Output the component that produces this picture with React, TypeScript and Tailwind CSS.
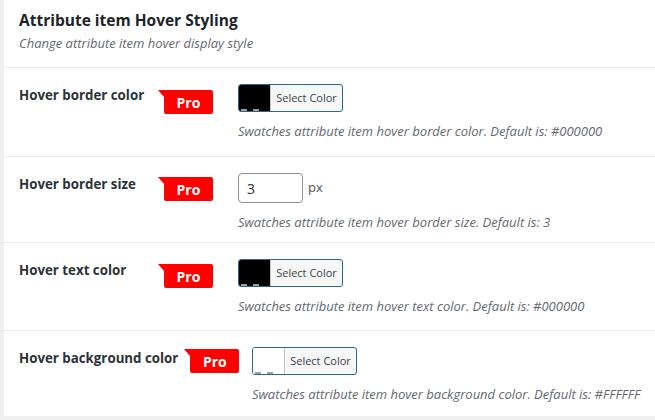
import React from "react";

type Row = {
  label: string;
  kind: "color" | "number";
  value: string;
  desc: string;
  labelWidth: string;
  height: string;
  badgeTop: string;
};

const rows: Row[] = [
  {
    label: "Hover border color",
    kind: "color",
    value: "#000000",
    desc: "Swatches attribute item hover border color. Default is: #000000",
    labelWidth: "w-[234px]",
    height: "h-[89px]",
    badgeTop: "mt-[5px]",
  },
  {
    label: "Hover border size",
    kind: "number",
    value: "3",
    desc: "Swatches attribute item hover border size. Default is: 3",
    labelWidth: "w-[234px]",
    height: "h-[86px]",
    badgeTop: "mt-[3px]",
  },
  {
    label: "Hover text color",
    kind: "color",
    value: "#000000",
    desc: "Swatches attribute item hover text color. Default is: #000000",
    labelWidth: "w-[234px]",
    height: "h-[88px]",
    badgeTop: "mt-[4px]",
  },
  {
    label: "Hover background color",
    kind: "color",
    value: "#FFFFFF",
    desc: "Swatches attribute item hover background color. Default is: #FFFFFF",
    labelWidth: "w-[248px]",
    height: "h-[86px]",
    badgeTop: "mt-[1px]",
  },
];

function ProBadge({ top }: { top: string }) {
  return (
    <div className={`relative h-[24px] w-[56px] shrink-0 ${top}`}>
      <svg width="56" height="24" viewBox="0 0 56 24" className="absolute left-0 top-0">
        <path d="M0 0 H53 Q55 0 55 2 V22 Q55 24 53 24 H8 Q6 24 6 22 V7 Z" fill="#ff0000" />
      </svg>
      <span className="absolute left-[6px] right-[1px] top-0 flex h-[24px] items-center justify-center text-[14px] font-bold text-white">
        Pro
      </span>
    </div>
  );
}

function ColorButton({ color }: { color: string }) {
  return (
    <div className="flex h-[28px] w-[105px] overflow-hidden rounded-[3px] border border-[#2a6a86] bg-[#f6f7f7]">
      <div className="relative w-[32px] border-r border-[#c3c4c7]" style={{ background: color }}>
        <div className="absolute bottom-0 left-[2px] h-[2px] w-[6px] bg-[#9aa0a6]" />
        <div className="absolute bottom-0 left-[14px] h-[2px] w-[6px] bg-[#9aa0a6]" />
      </div>
      <div className="flex flex-1 items-center justify-center text-[11px] text-[#3c434a]">
        Select Color
      </div>
    </div>
  );
}

export default function App() {
  return (
    <div
      className="h-[420px] w-[655px] overflow-hidden bg-[#f0f0f1] pl-[4px] pb-[4px]"
      style={{ fontFamily: '"Open Sans", "Noto Sans", sans-serif' }}
    >
      <div className="h-full bg-white">
        <div className="h-[68px] border-b border-[#ececec] px-[15px] pt-[9px]">
          <h2 className="text-[15.5px] font-bold leading-[22px] text-[#1d2327]">
            Attribute item Hover Styling
          </h2>
          <p className="mt-[4px] text-[13px] italic leading-[17px] text-[#646970]">
            Change attribute item hover display style
          </p>
        </div>

        {rows.map((row, i) => (
          <div
            key={row.label}
            className={`flex ${row.height} ${i < rows.length - 1 ? "border-b border-[#ececec]" : ""}`}
          >
            <div className={`flex ${row.labelWidth} shrink-0 items-start pl-[15px] pt-[17px]`}>
              <span className="min-w-[139px] pr-[6px] text-[13.3px] font-bold leading-[20px] text-[#2c3338]">
                {row.label}
              </span>
              <ProBadge top={row.badgeTop} />
            </div>
            <div className="pt-[16px]">
              {row.kind === "color" ? (
                <ColorButton color={row.value} />
              ) : (
                <div className="flex items-center">
                  <div className="flex h-[30px] w-[65px] items-center rounded-[4px] border border-[#8c8f94] px-[8px] text-[14px] text-[#2c3338]">
                    {row.value}
                  </div>
                  <span className="ml-[5px] text-[13px] text-[#50575e]">px</span>
                </div>
              )}
              <p className="mt-[10px] text-[13px] italic leading-[18px] text-[#646970]">{row.desc}</p>
            </div>
          </div>
        ))}
      </div>
    </div>
  );
}
